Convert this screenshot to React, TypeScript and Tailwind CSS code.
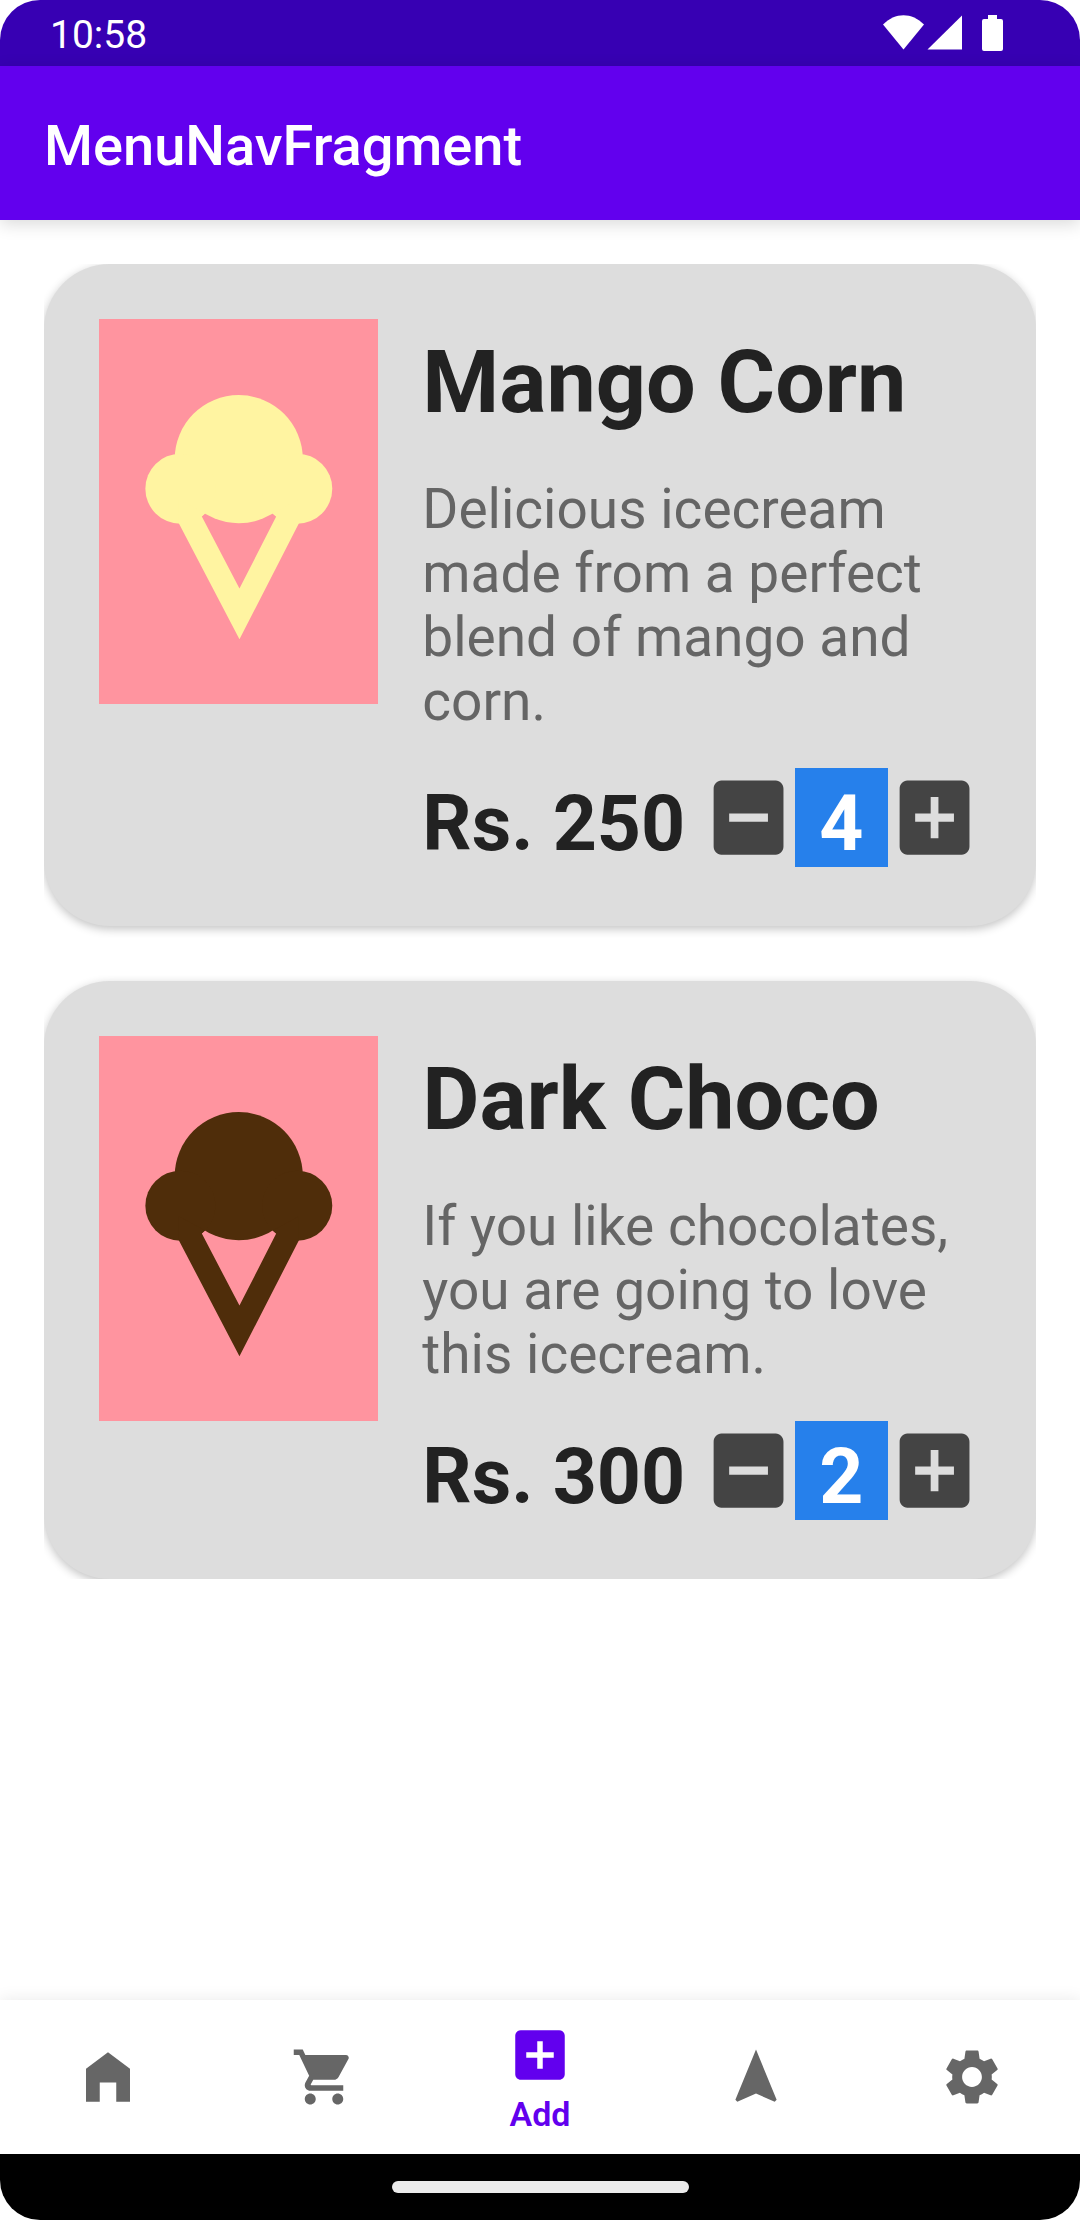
import { useState } from "react";

type Item = {
  name: string;
  description: string;
  price: number;
  quantity: number;
  scoop: string;
};

const items: Item[] = [
  {
    name: "Mango Corn",
    description: "Delicious icecream made from a perfect blend of mango and corn.",
    price: 250,
    quantity: 4,
    scoop: "text-[#fff4a1]",
  },
  {
    name: "Dark Choco",
    description: "If you like chocolates, you are going to love this icecream.",
    price: 300,
    quantity: 2,
    scoop: "text-[#4f2d0a]",
  },
];

const ADD_BOX =
  "M19 3H5c-1.11 0-2 .9-2 2v14c0 1.1.89 2 2 2h14c1.1 0 2-.9 2-2V5c0-1.1-.9-2-2-2zm-2 10h-4v4h-2v-4H7v-2h4V7h2v4h4v2z";
const MINUS_BOX =
  "M19 3H5c-1.11 0-2 .9-2 2v14c0 1.1.89 2 2 2h14c1.1 0 2-.9 2-2V5c0-1.1-.9-2-2-2zm-2 10H7v-2h10v2z";

const tabs = [
  { label: "Home", path: "M4 21V9l8-6 8 6v12h-5v-7H9v7z" },
  {
    label: "Cart",
    path: "M7 18c-1.1 0-1.99.9-1.99 2S5.9 22 7 22s2-.9 2-2-.9-2-2-2zM1 2v2h2l3.6 7.59-1.35 2.45c-.16.28-.25.61-.25.96 0 1.1.9 2 2 2h12v-2H7.42c-.14 0-.25-.11-.25-.25l.03-.12.9-1.63h7.45c.75 0 1.41-.41 1.75-1.03l3.58-6.49c.08-.14.12-.31.12-.48 0-.55-.45-1-1-1H5.21l-.94-2H1zm16 16c-1.1 0-1.99.9-1.99 2s.89 2 1.99 2 2-.9 2-2-.9-2-2-2z",
  },
  { label: "Add", path: ADD_BOX },
  { label: "Explore", path: "M12 2L4.5 20.29l.71.71L12 18l6.79 3 .71-.71z" },
  {
    label: "Settings",
    path: "M19.14 12.94c.04-.3.06-.61.06-.94 0-.32-.02-.64-.07-.94l2.03-1.58c.18-.14.23-.41.12-.61l-1.92-3.32c-.12-.22-.37-.29-.59-.22l-2.39.96c-.5-.38-1.03-.7-1.62-.94l-.36-2.54c-.04-.24-.24-.41-.48-.41h-3.84c-.24 0-.43.17-.47.41l-.36 2.54c-.59.24-1.13.57-1.62.94l-2.39-.96c-.22-.08-.47 0-.59.22L2.74 8.87c-.12.21-.08.47.12.61l2.03 1.58c-.05.3-.09.63-.09.94s.02.64.07.94l-2.03 1.58c-.18.14-.23.41-.12.61l1.92 3.32c.12.22.37.29.59.22l2.39-.96c.5.38 1.03.7 1.62.94l.36 2.54c.05.24.24.41.48.41h3.84c.24 0 .44-.17.47-.41l.36-2.54c.59-.24 1.13-.56 1.62-.94l2.39.96c.22.08.47 0 .59-.22l1.92-3.32c.12-.22.07-.47-.12-.61l-2.01-1.58zM12 15.6c-1.98 0-3.6-1.62-3.6-3.6s1.62-3.6 3.6-3.6 3.6 1.62 3.6 3.6-1.62 3.6-3.6 3.6z",
  },
];

function StatusBar() {
  return (
    <div className="flex h-[66px] items-center justify-between bg-[#3700b3] pl-[50px] pr-[75px] text-white">
      <span className="pt-[3px] text-[39px] leading-[46px]">10:58</span>
      <svg className="h-[36px] w-[122px]" viewBox="0 0 122 36" fill="currentColor" role="img" aria-label="Wi-Fi, signal and battery">
        <path d="M0 9.500C12-3 29-3 41 9.500L20.500 34.500z" />
        <path d="M79 .5V34.500H44.500z" />
        <path d="M105 0h9v4h4q2 0 2 2v28q0 2-2 2h-17q-2 0-2-2V6q0-2 2-2h4z" />
      </svg>
    </div>
  );
}

function IceCream({ tone }: { tone: string }) {
  return (
    <svg className={`block w-full ${tone}`} viewBox="0 0 279 385" fill="currentColor" role="img" aria-label="Ice cream">
      <circle cx="139.6" cy="140" r="64" />
      <circle cx="81.3" cy="169.5" r="35" />
      <circle cx="198" cy="169.5" r="35" />
      <path d="M79.7 204L140.3 320L199.7 204V180L173.7 194.3L177 197.3L140.3 269.3L102.7 197.3L105.7 194.3L79.7 180z" />
    </svg>
  );
}

function StepButton({ label, path, onClick }: { label: string; path: string; onClick: () => void }) {
  return (
    <button type="button" aria-label={label} onClick={onClick} className="h-[99px] text-[#444444]">
      <svg className="block h-full w-full" viewBox="0 0 24 24" preserveAspectRatio="none" fill="currentColor">
        <path d={path} />
      </svg>
    </button>
  );
}

function ItemCard({ item }: { item: Item }) {
  const [quantity, setQuantity] = useState(item.quantity);
  return (
    <article className="grid grid-cols-[1fr_2fr] items-start gap-[44px] rounded-[66px] bg-[#dddddd] px-[55px] pt-[55px] pb-[59px] shadow-[0_3px_10px_rgba(0,0,0,0.24)]">
      <div className="bg-[#ff949f]">
        <IceCream tone={item.scoop} />
      </div>
      <div className="min-w-0 pt-[11px]">
        <h2 className="text-[88px] leading-[104px] font-bold text-[#222222]">{item.name}</h2>
        <p className="mt-[43px] text-[55px] leading-[64px] text-[#656565]">{item.description}</p>
        <div className="mt-[35px] grid grid-cols-[3fr_1fr_1fr_1fr] text-[77px] leading-[86px] font-bold">
          <span className="pt-[13px] whitespace-nowrap text-[#222222]">Rs. {item.price}</span>
          <StepButton label="Decrease" path={MINUS_BOX} onClick={() => setQuantity((q) => Math.max(0, q - 1))} />
          <output className="bg-[#2680eb] pt-[13px] text-center text-white">{quantity}</output>
          <StepButton label="Increase" path={ADD_BOX} onClick={() => setQuantity((q) => q + 1)} />
        </div>
      </div>
    </article>
  );
}

function BottomNav() {
  const [active, setActive] = useState("Add");
  return (
    <nav className="grid h-[154px] grid-cols-5 bg-white shadow-[0_0_16px_rgba(0,0,0,0.09)]">
      {tabs.map((tab) => {
        const selected = tab.label === active;
        return (
          <button
            key={tab.label}
            type="button"
            aria-label={tab.label}
            aria-current={selected ? "page" : undefined}
            onClick={() => setActive(tab.label)}
            className={`flex flex-col items-center justify-center ${selected ? "text-[#6200ee]" : "text-[#666666]"}`}
          >
            <svg className="size-[66px]" viewBox="0 0 24 24" fill="currentColor">
              <path d={tab.path} />
            </svg>
            {selected && <span className="pt-[8px] text-[34px] leading-[36px] font-semibold">{tab.label}</span>}
          </button>
        );
      })}
    </nav>
  );
}

export default function App() {
  return (
    <div className="flex min-h-screen flex-col overflow-hidden rounded-[40px] bg-white font-['Roboto',sans-serif]">
      <StatusBar />
      <header className="flex h-[154px] items-center bg-[#6200ee] px-[44px] pt-[6px] text-white shadow-[0_4px_16px_rgba(0,0,0,0.15)]">
        <h1 className="text-[56px] leading-[64px] font-medium">MenuNavFragment</h1>
      </header>
      <main className="flex-1 px-[44px] pt-[44px]">
        <div className="flex flex-col gap-[55px] overflow-hidden">
          {items.map((item) => (
            <ItemCard key={item.name} item={item} />
          ))}
        </div>
      </main>
      <BottomNav />
      <div className="flex h-[66px] items-center justify-center bg-black">
        <div className="h-[12px] w-[297px] rounded-full bg-[#ebebeb]" />
      </div>
    </div>
  );
}
